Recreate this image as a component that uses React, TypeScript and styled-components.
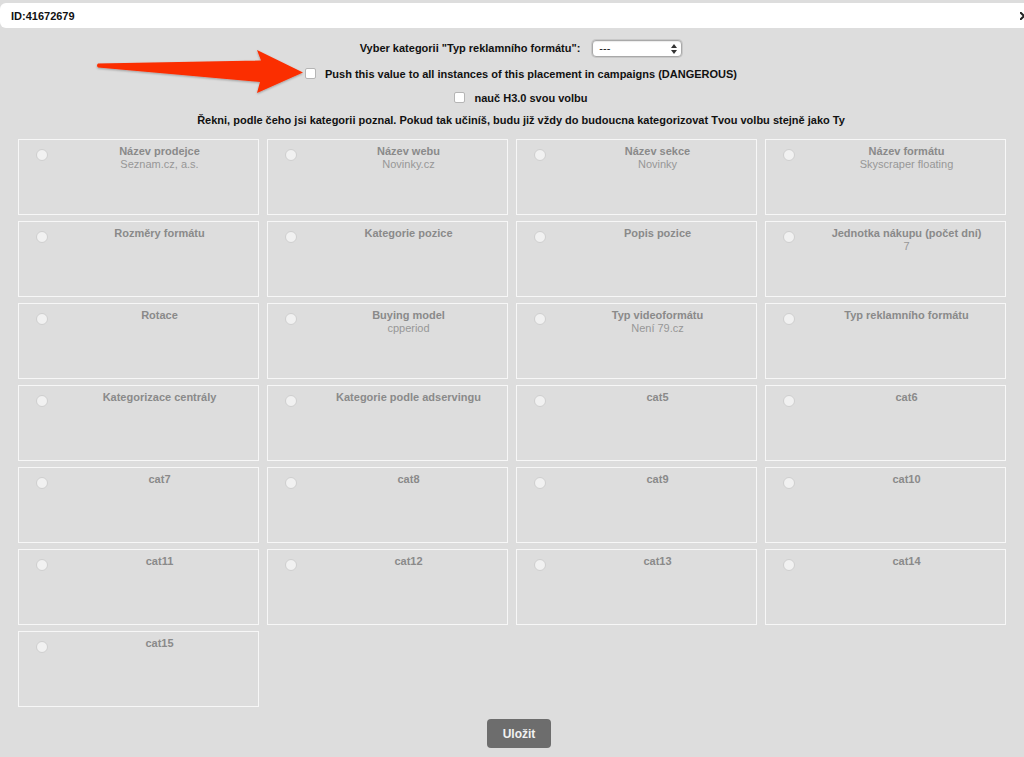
import React from "react";
import styled, { createGlobalStyle } from "styled-components";

const GlobalStyle = createGlobalStyle`
  html, body { margin: 0; padding: 0; background: #dddddd; }
  body { font-family: "Liberation Sans", Arial, Helvetica, sans-serif; }
`;

const Page = styled.div`
  position: relative;
  width: 1024px;
  height: 757px;
  overflow: hidden;
  padding-top: 3px;
  box-sizing: border-box;
`;

const TitleBar = styled.div`
  height: 25px;
  background: #ffffff;
  border-radius: 6px 0 0 6px;
  display: flex;
  align-items: center;
  justify-content: space-between;
  padding-left: 11px;
  font-size: 11px;
  font-weight: bold;
  color: #111;
`;

const CloseIcon = styled.svg`
  flex: none;
  margin-right: 0;
`;

const Content = styled.div`
  padding-left: 18px;
  display: flex;
  flex-direction: column;
`;

const Header = styled.div`
  display: flex;
  flex-direction: column;
  align-items: center;
  font-size: 11px;
  font-weight: bold;
  color: #111;
`;

const HeaderRow = styled.div<{ $h: number; $top?: number }>`
  height: ${(p) => p.$h}px;
  padding-top: ${(p) => p.$top ?? 0}px;
  display: flex;
  align-items: center;
  gap: 6px;
`;

const SelectWrap = styled.div`
  position: relative;
  margin-left: 6px;
`;

const Select = styled.select`
  appearance: none;
  -webkit-appearance: none;
  width: 90px;
  height: 17px;
  border: 1px solid #a9a9a9;
  border-radius: 4px;
  background: #fff;
  box-shadow: 0 0 0 1px #c8c8c8, inset 0 1px 1px rgba(0,0,0,0.08);
  font-family: "Liberation Sans", Arial, sans-serif;
  font-size: 11px;
  padding: 0 0 0 6px;
  color: #111;
  outline: none;
`;

const SelectArrows = styled.svg`
  position: absolute;
  right: 5px;
  top: 4px;
  pointer-events: none;
`;

const Check = styled.input.attrs({ type: "checkbox" })`
  appearance: none;
  -webkit-appearance: none;
  width: 11px;
  height: 11px;
  margin: 0 3px 0 0;
  border: 1px solid #b5b5b5;
  border-radius: 2px;
  background: #fff;
  box-sizing: border-box;
`;

const Grid = styled.div`
  margin-top: 14px;
  display: grid;
  grid-template-columns: repeat(4, 241px);
  grid-auto-rows: 76px;
  column-gap: 8px;
  row-gap: 6px;
`;

const Card = styled.label`
  box-sizing: border-box;
  border: 1px solid #f7f7f7;
  display: flex;
  align-items: flex-start;
  padding-top: 5px;
`;

const RadioCell = styled.div`
  width: 42px;
  flex: none;
  display: flex;
  justify-content: center;
  padding-top: 4px;
  margin-left: 2px;
`;

const Radio = styled.input.attrs({ type: "radio", disabled: true })`
  appearance: none;
  -webkit-appearance: none;
  width: 12px;
  height: 12px;
  margin: 0;
  border-radius: 50%;
  border: 1px solid #cfcfcf;
  background: #f1f1f1;
  box-sizing: border-box;
`;

const CardText = styled.div`
  flex: 1;
  display: flex;
  flex-direction: column;
  align-items: center;
  text-align: center;
  padding-right: 2px;
  font-size: 11px;
  line-height: 13px;
`;

const CardTitle = styled.div`
  font-weight: bold;
  color: #8a8a8a;
`;

const CardValue = styled.div`
  color: #979797;
`;

const Footer = styled.div`
  display: flex;
  justify-content: center;
  margin-top: 12px;
`;

const SaveButton = styled.button`
  width: 64px;
  height: 29px;
  border: none;
  border-radius: 4px;
  background: #6d6d6d;
  color: #f2f2f2;
  font-family: "Liberation Sans", Arial, sans-serif;
  font-size: 12px;
  font-weight: bold;
  margin-left: -4px;
`;

const ArrowOverlay = styled.svg`
  position: absolute;
  left: 0;
  top: 0;
  pointer-events: none;
`;

const cards: { title: string; value?: string }[] = [
  { title: "Název prodejce", value: "Seznam.cz, a.s." },
  { title: "Název webu", value: "Novinky.cz" },
  { title: "Název sekce", value: "Novinky" },
  { title: "Název formátu", value: "Skyscraper floating" },
  { title: "Rozměry formátu" },
  { title: "Kategorie pozice" },
  { title: "Popis pozice" },
  { title: "Jednotka nákupu (počet dní)", value: "7" },
  { title: "Rotace" },
  { title: "Buying model", value: "cpperiod" },
  { title: "Typ videoformátu", value: "Není 79.cz" },
  { title: "Typ reklamního formátu" },
  { title: "Kategorizace centrály" },
  { title: "Kategorie podle adservingu" },
  { title: "cat5" },
  { title: "cat6" },
  { title: "cat7" },
  { title: "cat8" },
  { title: "cat9" },
  { title: "cat10" },
  { title: "cat11" },
  { title: "cat12" },
  { title: "cat13" },
  { title: "cat14" },
  { title: "cat15" },
];

export default function App() {
  return (
    <Page>
      <GlobalStyle />
      <TitleBar>
        <span>ID:41672679</span>
        <CloseIcon width="4" height="8" viewBox="0 0 4 8">
          <path d="M0 0 L4 4 M0 8 L4 4" stroke="#222" strokeWidth="2" />
        </CloseIcon>
      </TitleBar>
      <Content>
        <Header>
          <HeaderRow $h={38} $top={1}>
            <span>Vyber kategorii "Typ reklamního formátu":</span>
            <SelectWrap>
              <Select defaultValue="">
                <option value="">---</option>
              </Select>
              <SelectArrows width="6" height="10" viewBox="0 0 6 10">
                <path d="M3 0 L6 4 L0 4 Z M3 10 L6 6 L0 6 Z" fill="#333" />
              </SelectArrows>
            </SelectWrap>
          </HeaderRow>
          <HeaderRow $h={13}>
            <Check />
            <span>Push this value to all instances of this placement in campaigns (DANGEROUS)</span>
          </HeaderRow>
          <HeaderRow $h={35}>
            <Check />
            <span>nauč H3.0 svou volbu</span>
          </HeaderRow>
          <HeaderRow $h={10}>
            <span>Řekni, podle čeho jsi kategorii poznal. Pokud tak učiníš, budu již vždy do budoucna kategorizovat Tvou volbu stejně jako Ty</span>
          </HeaderRow>
        </Header>
        <Grid>
          {cards.map((c) => (
            <Card key={c.title}>
              <RadioCell>
                <Radio name="cat" />
              </RadioCell>
              <CardText>
                <CardTitle>{c.title}</CardTitle>
                {c.value && <CardValue>{c.value}</CardValue>}
              </CardText>
            </Card>
          ))}
        </Grid>
        <Footer>
          <SaveButton>Uložit</SaveButton>
        </Footer>
      </Content>
      <ArrowOverlay width="1024" height="757" viewBox="0 0 1024 757">
        <defs>
          <filter id="sh" x="-10%" y="-50%" width="120%" height="200%">
            <feDropShadow dx="0" dy="1" stdDeviation="1" floodColor="#000" floodOpacity="0.3" />
          </filter>
        </defs>
        <path
          d="M98 63.5 L261 60.5 L257 50 L303 72.5 L257 93 L260 82 L98 67.5 Q96 65.5 98 63.5 Z"
          fill="#fb2d05"
          filter="url(#sh)"
        />
      </ArrowOverlay>
    </Page>
  );
}
